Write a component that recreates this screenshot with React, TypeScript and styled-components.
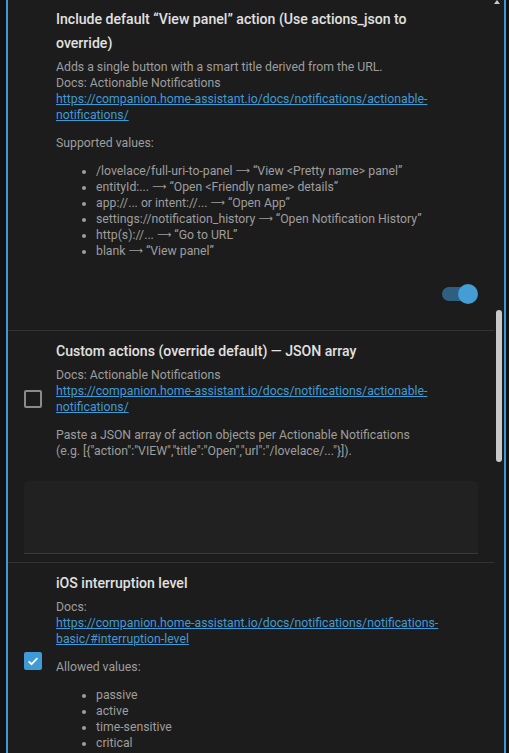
import React from 'react';
import styled, { createGlobalStyle } from 'styled-components';

const GlobalStyle = createGlobalStyle`
    html, body {
        margin: 0;
        padding: 0;
        background: #121212;
    }
    body {
        font-family: Roboto, 'Noto Sans', sans-serif;
    }
`;

const LINK_ACTIONABLE =
    'https://companion.home-assistant.io/docs/notifications/actionable-notifications/';
const LINK_INTERRUPTION =
    'https://companion.home-assistant.io/docs/notifications/notifications-basic/#interruption-level';

const viewPanelValues = [
    ['/lovelace/full-uri-to-panel', '“View <Pretty name> panel”'],
    ['entityId:...', '“Open <Friendly name> details”'],
    ['app://... or intent://...', '“Open App”'],
    ['settings://notification_history', '“Open Notification History”'],
    ['http(s)://...', '“Go to URL”'],
    ['blank', '“View panel”'],
];

const interruptionLevels = ['passive', 'active', 'time-sensitive', 'critical'];

const App: React.FC = () => {
    return (
        <>
            <GlobalStyle />
            <Frame>
                <ScrollArrow />
                <ScrollThumb />
                <List>
                    <Row>
                        <Lead />
                        <Label>
                            <Title>
                                Include default “View panel” action (Use actions_json to
                                override)
                            </Title>
                            <Description>
                                <p>
                                    Adds a single button with a smart title derived from the URL.
                                    <br />
                                    Docs: Actionable Notifications
                                    <br />
                                    <a href={LINK_ACTIONABLE}>{LINK_ACTIONABLE}</a>
                                </p>
                                <p>Supported values:</p>
                                <ul>
                                    {viewPanelValues.map(([from, to]) => (
                                        <li key={from}>
                                            {from} <Arrow>⟶</Arrow> {to}
                                        </li>
                                    ))}
                                </ul>
                            </Description>
                        </Label>
                        <ToggleRow>
                            <Toggle>
                                <ToggleTrack />
                                <ToggleThumb />
                            </Toggle>
                        </ToggleRow>
                    </Row>

                    <Row>
                        <Lead>
                            <Checkbox />
                        </Lead>
                        <Label>
                            <Title>Custom actions (override default) — JSON array</Title>
                            <Description>
                                <p>
                                    Docs: Actionable Notifications
                                    <br />
                                    <a href={LINK_ACTIONABLE}>{LINK_ACTIONABLE}</a>
                                </p>
                                <p>
                                    Paste a JSON array of action objects per Actionable Notifications
                                    (e.g.{'\u00a0'}[{'{'}"action":"VIEW","title":"Open","url":"/lovelace/..."{'}'}]).
                                </p>
                            </Description>
                        </Label>
                        <TextArea />
                    </Row>

                    <Row>
                        <Lead>
                            <Checkbox $checked>
                                <svg width="14" height="14" viewBox="0 0 24 24">
                                    <path
                                        d="M4.5 12.5l5 5L19.5 7"
                                        fill="none"
                                        stroke="#fff"
                                        strokeWidth="3"
                                    />
                                </svg>
                            </Checkbox>
                        </Lead>
                        <Label>
                            <Title>iOS interruption level</Title>
                            <Description>
                                <p>
                                    Docs:
                                    <br />
                                    <a href={LINK_INTERRUPTION}>{LINK_INTERRUPTION}</a>
                                </p>
                                <p>Allowed values:</p>
                                <ul>
                                    {interruptionLevels.map((v) => (
                                        <li key={v}>{v}</li>
                                    ))}
                                </ul>
                            </Description>
                        </Label>
                    </Row>
                </List>
            </Frame>
        </>
    );
};

const Frame = styled.div`
    position: relative;
    box-sizing: border-box;
    margin-left: 6px;
    width: 500px;
    height: 753px;
    overflow: hidden;
    background: #1c1c1c;
    border-left: 2px solid #3f9bd6;
    border-right: 2px solid #3f9bd6;
`;

const ScrollArrow = styled.div`
    position: absolute;
    top: 0;
    right: 4px;
    width: 0;
    height: 0;
    border-left: 3px solid transparent;
    border-right: 3px solid transparent;
    border-bottom: 4px solid #c8c8c8;
`;

const ScrollThumb = styled.div`
    position: absolute;
    top: 310px;
    right: 2px;
    width: 6px;
    height: 152px;
    border-radius: 3px;
    background: #c9c9c9;
`;

const List = styled.div`
    margin-top: -1px;
    margin-right: 10px;
`;

const Row = styled.div`
    display: grid;
    grid-template-columns: 32px 1fr;
    padding: 8px 16px;

    & ~ & {
        border-top: 1px solid #333;
    }
`;

const Lead = styled.div`
    display: flex;
    align-items: center;
`;

const Label = styled.div`
    padding-right: 37px;
    min-width: 0;
`;

const Title = styled.div`
    font-size: 14.1px;
    font-weight: 500;
    line-height: 24px;
    color: #e1e1e1;
`;

const Description = styled.div`
    margin-top: 4px;
    font-size: 12.25px;
    line-height: 16px;
    color: #9e9e9e;

    p {
        margin: 0;
    }
    p + p,
    p + ul {
        margin-top: 12px;
    }
    ul {
        margin: 0;
        padding-left: 40px;
    }
    a {
        color: #3f9bd6;
        text-decoration: underline;
    }
`;

const Arrow = styled.span`
    display: inline-block;
    font-family: 'DejaVu Sans', sans-serif;
    font-size: 10px;
    line-height: 10px;
    vertical-align: 1px;
`;

const Checkbox = styled.div<{ $checked?: boolean }>`
    box-sizing: border-box;
    width: 18px;
    height: 18px;
    border-radius: 2px;
    display: flex;
    align-items: center;
    justify-content: center;
    background: ${(p) => (p.$checked ? '#3f9bd6' : 'transparent')};
    border: ${(p) => (p.$checked ? 'none' : '2px solid #8b8b8b')};
`;

const ToggleRow = styled.div`
    grid-column: 1 / -1;
    display: flex;
    justify-content: flex-end;
    margin: 25px 0 18px;
`;

const Toggle = styled.div`
    position: relative;
    width: 36px;
    height: 20px;
`;

const ToggleTrack = styled.div`
    position: absolute;
    left: 0;
    top: 3px;
    width: 34px;
    height: 14px;
    border-radius: 7px;
    background: #2f5f80;
`;

const ToggleThumb = styled.div`
    position: absolute;
    right: 0;
    top: 0;
    width: 20px;
    height: 20px;
    border-radius: 50%;
    background: #449dd4;
`;

const TextArea = styled.div`
    grid-column: 1 / -1;
    margin-top: 22px;
    height: 72px;
    background: #212121;
    border-radius: 4px 4px 0 0;
    border-bottom: 1px solid #3a3a3a;
`;

export default App;
